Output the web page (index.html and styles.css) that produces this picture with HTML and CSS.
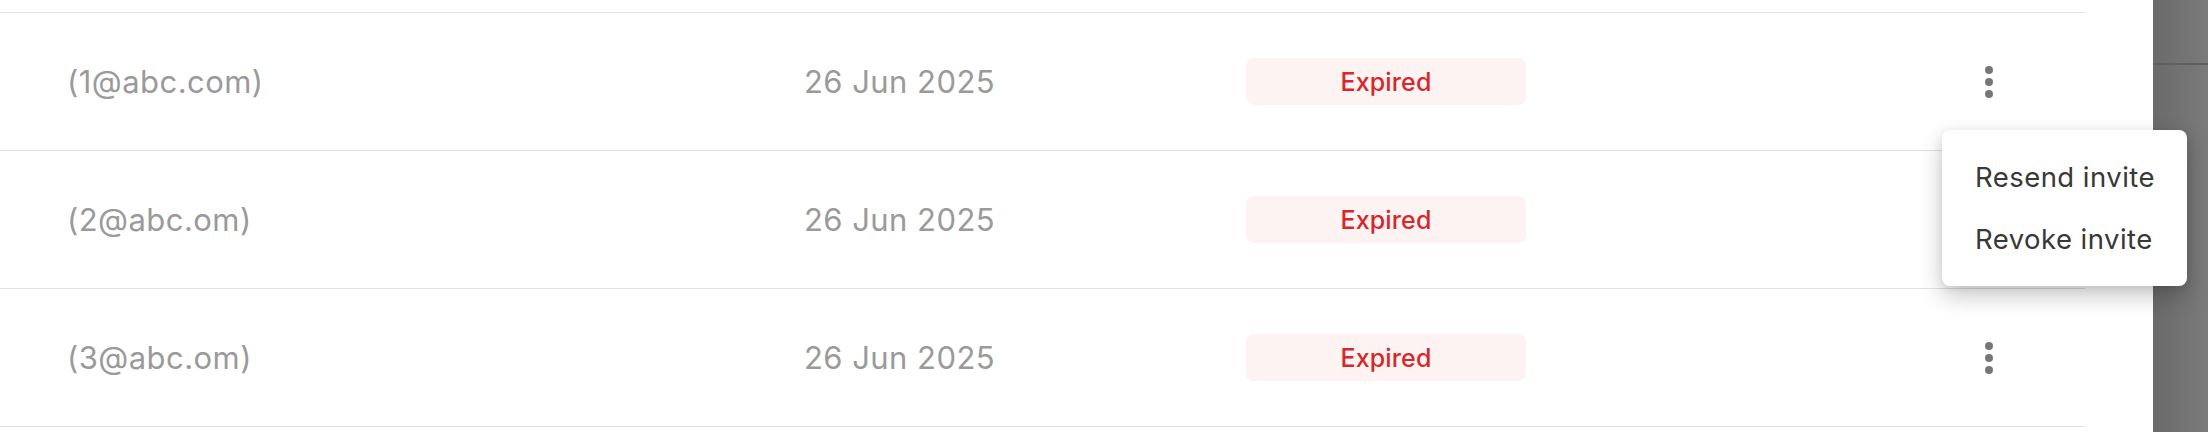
FILE: index.html
```html
<!DOCTYPE html>
<html>
<head>
<meta charset="utf-8">
<link rel="stylesheet" href="styles.css">
</head>
<body>
<div class="page">
  <div class="table">
    <div class="row">
      <div class="email">(1@abc.com)</div>
      <div class="date">26 Jun 2025</div>
      <div class="badge">Expired</div>
      <div class="actions"><span class="kebab"><i></i><i></i><i></i></span></div>
    </div>
    <div class="row">
      <div class="email">(2@abc.om)</div>
      <div class="date">26 Jun 2025</div>
      <div class="badge">Expired</div>
      <div class="actions"><span class="kebab"><i></i><i></i><i></i></span></div>
    </div>
    <div class="row">
      <div class="email">(3@abc.om)</div>
      <div class="date">26 Jun 2025</div>
      <div class="badge">Expired</div>
      <div class="actions"><span class="kebab"><i></i><i></i><i></i></span></div>
    </div>
  </div>
  <div class="side-panel"></div>
  <div class="menu">
    <div class="menu-item">Resend invite</div>
    <div class="menu-item">Revoke invite</div>
  </div>
</div>
</body>
</html>
```
FILE: styles.css
```css
html, body {
  margin: 0;
  padding: 0;
  background: #ffffff;
}
body {
  font-family: Inter, "Noto Sans", sans-serif;
  width: 2208px;
  height: 432px;
  overflow: hidden;
}
.page {
  position: relative;
  width: 2208px;
  height: 432px;
}
.table {
  width: 2085px;
  padding-top: 12px;
}
.row {
  display: grid;
  grid-template-columns: 737px 442px 280px 1fr;
  align-items: center;
  height: 137px;
  padding-left: 67px;
  border-top: 1px solid #e4e0e1;
}
.row:last-child {
  border-bottom: 1px solid #e4e0e1;
}
.email, .date {
  font-size: 31px;
  color: #9a9a9a;
  line-height: 1;
  letter-spacing: 0.45px;
}
.badge {
  height: 47px;
  border-radius: 8px;
  background: #fdf3f2;
  color: #d6282b;
  font-weight: 500;
  font-size: 25px;
  letter-spacing: 0.15px;
  display: flex;
  align-items: center;
  justify-content: center;
}
.actions {
  display: flex;
  justify-content: flex-end;
  padding-right: 72px;
}
.kebab {
  width: 48px;
  height: 48px;
  display: flex;
  flex-direction: column;
  align-items: center;
  justify-content: center;
  gap: 4px;
}
.kebab i {
  width: 8px;
  height: 8px;
  border-radius: 50%;
  background: #777777;
}
.side-panel {
  position: absolute;
  top: 0;
  right: 0;
  width: 55px;
  height: 432px;
  background:
    linear-gradient(to bottom, transparent 63px, #5f5f5f 63px, #5f5f5f 65px, transparent 65px),
    linear-gradient(to right, #6a6a6a, #7b7b7b);
}
.menu {
  position: absolute;
  left: 1942px;
  top: 130px;
  width: 245px;
  padding: 16px 0;
  background: #ffffff;
  border-radius: 8px;
  box-shadow: 0 10px 24px rgba(0, 0, 0, 0.22), 0 2px 8px rgba(0, 0, 0, 0.08);
}
.menu-item {
  height: 62px;
  line-height: 62px;
  padding-left: 33px;
  font-size: 27.5px;
  letter-spacing: 0.45px;
  color: #383838;
}
```
